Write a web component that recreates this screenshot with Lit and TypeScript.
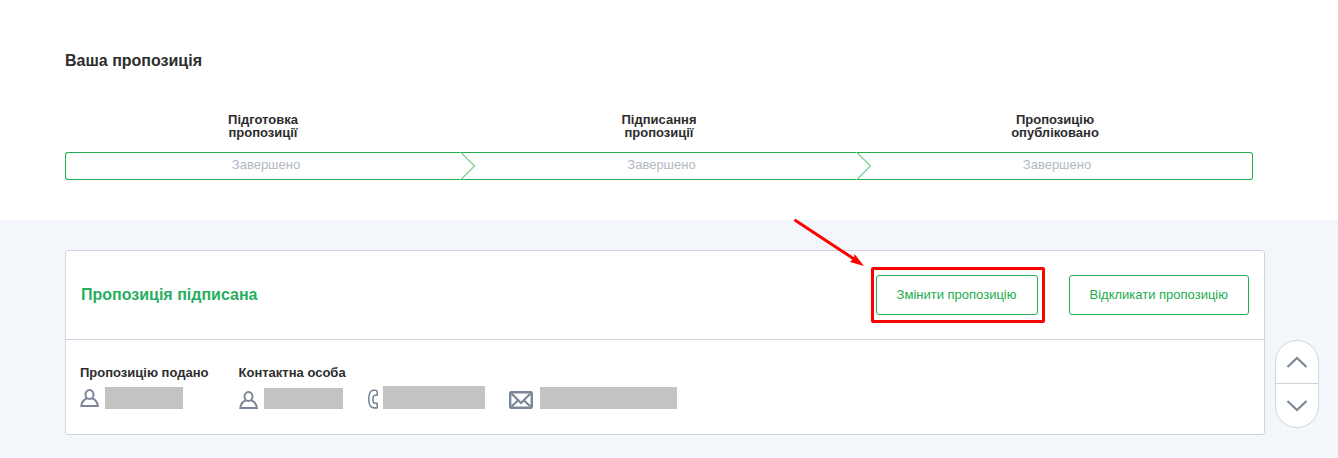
import { LitElement, html, css, svg } from "lit";
import { customElement } from "lit/decorators.js";

const personIcon = html`<svg class="icon" width="20" height="18" viewBox="0 0 20 18" fill="none" stroke="#7b8797" stroke-width="2" aria-hidden="true">
  <ellipse cx="9.500" cy="5.500" rx="4" ry="4.500"></ellipse>
  <path d="M7 9.200C4 10.400 1.700 13 1.300 17H17.900C17.400 13 15.200 10.400 12 9.200"></path>
</svg>`;

const phoneIcon = html`<svg class="icon" width="12" height="20" viewBox="0 0 12 20" fill="none" stroke="#7b8797" stroke-width="1.600" stroke-linejoin="round" aria-hidden="true">
  <path d="M10.200 6.200V3.200Q10.200 1.200 8.200 1.200H6.800C3.300 1.200 1.800 5.500 1.800 10s1.500 8.900 5 8.900H10.200V14.300H7.600C6.400 13.800 5.900 12.300 5.900 10.200s.5-3.500 1.700-4H10.200Z"></path>
</svg>`;

const mailIcon = html`<svg class="icon" width="24" height="18" viewBox="0 0 24 18" fill="none" stroke="#7b8797" aria-hidden="true">
  <rect x="1.200" y="1.200" width="21.600" height="15.600" rx="1" stroke-width="2.400"></rect>
  <path d="M2.500 2.500L12 12L21.500 2.500M2.500 15.500L9 9.500M21.500 15.500L15 9.500" stroke-width="2.200"></path>
</svg>`;

const steps = [
  ["Підготовка", "пропозиції"],
  ["Підписання", "пропозиції"],
  ["Пропозицію", "опубліковано"],
];

@customElement("app-root")
export class AppRoot extends LitElement {
  static styles = css`
    :host {
      display: flex;
      flex-direction: column;
      min-height: 100vh;
      background: #f3f6fa;
      color: #2d2d2d;
      font: 13px/16px "Liberation Sans", Arial, sans-serif;
    }
    * { box-sizing: border-box; }
    h1, h2, h3, ol, p { margin: 0; padding: 0; }
    .progress { background: #fff; padding: 51px 85px 40px 65px; }
    h1 { font-size: 16px; line-height: 20px; }
    .steps { display: grid; grid-template-columns: repeat(3, 1fr); list-style: none; margin-top: 42px; }
    .name { font-weight: bold; line-height: 13px; text-align: center; }
    .name span { display: block; }
    .state {
      position: relative;
      height: 28px;
      margin-top: 13px;
      padding-left: 5px;
      border: solid #22ac4e;
      border-width: 1px 0;
      color: #b0b8c4;
      line-height: 24px;
      text-align: center;
    }
    .step:first-child .state { border-left-width: 1px; border-radius: 3px 0 0 3px; }
    .step:last-child .state { border-right-width: 1px; border-radius: 0 3px 3px 0; }
    .chevron { position: absolute; right: -15px; top: -1px; }
    .body { padding: 30px 73px 23px 65px; }
    .card { background: #fff; border: 1px solid #cfd3de; border-radius: 3px; }
    .head {
      display: flex;
      align-items: center;
      gap: 30px;
      height: 89px;
      padding: 0 15px;
      border-bottom: 1px solid #cfd3de;
    }
    h2 { flex: 1; color: #27ae60; font-size: 16px; line-height: 20px; }
    .action {
      height: 40px;
      padding: 0 20px;
      border: 1px solid #22ac4e;
      border-radius: 3px;
      background: #fff;
      color: #22ac4e;
      font: inherit;
      cursor: pointer;
    }
    .marked { position: relative; display: flex; margin-right: 1px; }
    .frame { position: absolute; inset: -8px -7px -8px -5px; border: 3px solid #f00; border-radius: 2px; pointer-events: none; }
    .arrow { position: absolute; left: -84px; top: -58px; pointer-events: none; }
    .details { display: flex; gap: 30px; padding: 25px 14px; }
    h3 { font-size: 13px; line-height: 16px; }
    .line { display: flex; align-items: center; height: 22px; margin-top: 6px; }
    .contacts { display: flex; align-items: flex-end; height: 23px; margin-top: 5px; gap: 24px; }
    .contact { display: flex; align-items: flex-end; gap: 5px; }
    .contact.phone { gap: 4px; }
    .contact.mail { gap: 7px; }
    .line { gap: 5px; }
    .icon { display: block; flex: none; }
    .redacted { display: block; background: #c3c3c3; height: 22px; }
    .w-sender { width: 78px; }
    .w-name { width: 79px; height: 21px; }
    .w-phone { width: 102px; height: 23px; }
    .w-mail { width: 137px; }
    .pager {
      position: fixed;
      right: 19px;
      bottom: 30px;
      width: 44px;
      display: flex;
      flex-direction: column;
      overflow: hidden;
      border: 1px solid #cfd3de;
      border-radius: 22px;
      background: #fff;
    }
    .pager button { height: 43px; display: flex; align-items: center; justify-content: center; padding: 0; border: 0; background: none; cursor: pointer; }
    .pager button:first-child { border-bottom: 1px solid #cfd3de; }
  `;

  render() {
    return html`
      <section class="progress">
        <h1>Ваша пропозиція</h1>
        <ol class="steps">
          ${steps.map(
            (lines, i) => html`<li class="step">
              <div class="name">${lines.map((l) => html`<span>${l}</span>`)}</div>
              <div class="state">
                Завершено
                ${i < steps.length - 1
                  ? html`<svg class="chevron" width="16" height="28" viewBox="0 0 16 28" fill="none" aria-hidden="true">
                      ${svg`<path d="M0 0.500H1L14.500 14L1 27.500H0" fill="#fff"></path><path d="M1 0.500L14.500 14L1 27.500" stroke="#80d09a" stroke-width="1.300"></path>`}
                    </svg>`
                  : null}
              </div>
            </li>`
          )}
        </ol>
      </section>
      <main class="body">
        <article class="card">
          <header class="head">
            <h2>Пропозиція підписана</h2>
            <div class="marked">
              <button class="action" type="button">Змінити пропозицію</button>
              <span class="frame"></span>
              <svg class="arrow" width="76" height="52" viewBox="0 0 76 52" aria-hidden="true">
                <path d="M3.500 3.500L62 42" stroke="#f00" stroke-width="3" stroke-linecap="round"></path>
                <path d="M72 49L62.500 37L62 41L58 45Z" fill="#f00"></path>
              </svg>
            </div>
            <button class="action" type="button">Відкликати пропозицію</button>
          </header>
          <div class="details">
            <section>
              <h3>Пропозицію подано</h3>
              <div class="line">${personIcon}<span class="redacted w-sender"></span></div>
            </section>
            <section>
              <h3>Контактна особа</h3>
              <div class="contacts">
                <div class="contact">${personIcon}<span class="redacted w-name"></span></div>
                <div class="contact phone">${phoneIcon}<span class="redacted w-phone"></span></div>
                <div class="contact mail">${mailIcon}<span class="redacted w-mail"></span></div>
              </div>
            </section>
          </div>
        </article>
      </main>
      <nav class="pager">
        <button type="button" aria-label="Вгору">
          <svg width="20" height="12" viewBox="0 0 20 12" fill="none" stroke="#7b8797" stroke-width="2"><path d="M0.500 11L10 2L19.500 11"></path></svg>
        </button>
        <button type="button" aria-label="Вниз">
          <svg width="20" height="12" viewBox="0 0 20 12" fill="none" stroke="#7b8797" stroke-width="2"><path d="M0.500 1L10 10L19.500 1"></path></svg>
        </button>
      </nav>
    `;
  }
}
